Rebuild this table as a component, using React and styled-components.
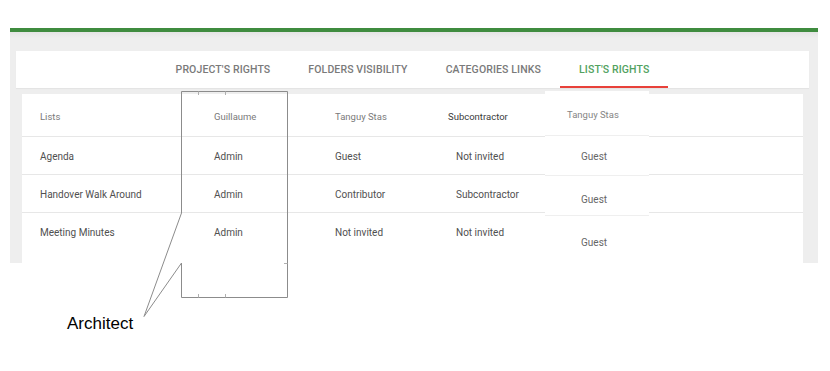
import React from 'react'
import styled, { createGlobalStyle } from 'styled-components'

const colors = {
  green: '#3f8c3f',
  gray: '#eeeeee',
  tabText: '#7a7a7a',
  active: '#52a25f',
  red: '#e8413a',
  line: '#e7e7e7',
  head: '#7a7a7a',
  cell: '#505050',
  callout: '#8c8c8c',
}

const tabs = ["Project's rights", 'Folders visibility', 'Categories links', "List's rights"]

const columns = [
  { name: 'Guillaume' },
  { name: 'Tanguy Stas' },
  { name: 'Subcontractor', pasted: true },
]

const rows = [
  { list: 'Agenda', values: ['Admin', 'Guest', 'Not invited'] },
  { list: 'Handover Walk Around', values: ['Admin', 'Contributor', 'Subcontractor'] },
  { list: 'Meeting Minutes', values: ['Admin', 'Not invited', 'Not invited'] },
]

// pasted column on the right, slightly off the grid of the table
const extraColumn = { name: 'Tanguy Stas', values: [{ v: 'Guest', offset: 15 }, { v: 'Guest', offset: 18 }, { v: 'Guest', offset: 21 }] }

const App = () => (
  <>
    <GlobalStyle />
    <Page>
      <Shell>
        <TabBar>
          {tabs.map((t, i) => (
            <Tab key={t} active={i === tabs.length - 1}>
              {t}
            </Tab>
          ))}
        </TabBar>
        <TableCard>
          <HeadRow>
            <HeadCell>Lists</HeadCell>
            {columns.map((c) => (
              <HeadCell key={c.name} pasted={c.pasted}>
                {c.name}
              </HeadCell>
            ))}
          </HeadRow>
          {rows.map((r, i) => (
            <Row key={r.list} last={i === rows.length - 1}>
              <Cell>{r.list}</Cell>
              {r.values.map((v, j) => (
                <Cell key={j}>{v}</Cell>
              ))}
            </Row>
          ))}
          <ExtraColumn>
            <ExtraHead>{extraColumn.name}</ExtraHead>
            {extraColumn.values.map((c, i) => (
              <ExtraCell key={i} offset={c.offset} last={i === extraColumn.values.length - 1}>
                {c.v}
              </ExtraCell>
            ))}
          </ExtraColumn>
        </TableCard>
      </Shell>
      <Callout width="830" height="371" viewBox="0 0 830 371">
        <path
          d="M181.5 91.5 V213 L144 316.5 L181.5 263 V297.5 H287.5 V91.5 Z"
          fill="none"
          stroke={colors.callout}
          strokeWidth="1"
        />
        <g stroke="#b0b0b0" strokeWidth="1">
          <path d="M198.5 91.5 V95" />
          <path d="M225.5 91.5 V95" />
          <path d="M198.5 294 V297.5" />
          <path d="M225.5 294 V297.5" />
          <path d="M284 263.5 H287.5" />
        </g>
      </Callout>
      <Label>Architect</Label>
    </Page>
  </>
)

export default App

const GlobalStyle = createGlobalStyle`
  body {
    margin: 0;
    background: #ffffff;
    font-family: Roboto, 'Liberation Sans', sans-serif;
  }
`

const Page = styled.div`
  position: relative;
  width: 830px;
  height: 371px;
  padding: 28px 0 0 10px;
  box-sizing: border-box;
`

const Shell = styled.div`
  width: 808px;
  height: 235px;
  border-top: 4px solid ${colors.green};
  box-sizing: border-box;
  background: linear-gradient(to bottom, #e4e4e4 0px, ${colors.gray} 6px);
  display: flex;
  flex-direction: column;
  overflow: hidden;
`

const TabBar = styled.div`
  margin: 19px 9px 0 6px;
  height: 37px;
  background: #ffffff;
  display: flex;
  justify-content: center;
  box-shadow: 0 1px 1px rgba(0, 0, 0, 0.04);
`

const Tab = styled.div`
  display: flex;
  align-items: center;
  padding: 2px 19px 0;
  box-sizing: border-box;
  height: 37px;
  font-size: 10.5px;
  font-weight: 500;
  letter-spacing: 0.12px;
  text-transform: uppercase;
  color: ${(p) => (p.active ? colors.active : colors.tabText)};
  border-bottom: 2px solid ${(p) => (p.active ? colors.red : 'transparent')};
`

const TableCard = styled.div`
  position: relative;
  margin: 6px 15px 0 12px;
  flex: 1;
  background: #ffffff;
`

const grid = `
  display: grid;
  grid-template-columns: 174px 121px 121px 1fr;
  align-items: center;
`

const HeadRow = styled.div`
  ${grid}
  height: 43px;
  padding-top: 2px;
  box-sizing: border-box;
  border-bottom: 1px solid ${colors.line};
`

const HeadCell = styled.div`
  padding-left: 18px;
  font-size: 9.5px;
  color: ${(p) => (p.pasted ? '#3a3a3a' : colors.head)};
  margin-left: ${(p) => (p.pasted ? '-8px' : '0')};
  margin-top: ${(p) => (p.pasted ? '1px' : '0')};
`

const Row = styled.div`
  ${grid}
  height: 38px;
  padding-top: 2px;
  box-sizing: border-box;
  border-bottom: 1px solid ${(p) => (p.last ? 'transparent' : colors.line)};
`

const Cell = styled.div`
  padding-left: 18px;
  font-size: 10px;
  color: ${colors.cell};
`

const ExtraColumn = styled.div`
  position: absolute;
  left: 523px;
  top: -3px;
  bottom: 0;
  width: 104px;
  background: #ffffff;
`

const ExtraHead = styled.div`
  height: 45px;
  border-bottom: 1px solid #efefef;
  padding: 18px 0 0 22px;
  box-sizing: border-box;
  font-size: 9.5px;
  color: #858585;
`

const ExtraCell = styled.div`
  height: 40px;
  box-sizing: border-box;
  border-bottom: 1px solid ${(p) => (p.last ? 'transparent' : '#efefef')};
  padding: ${(p) => p.offset}px 0 0 36px;
  font-size: 10px;
  color: #666666;
`

const Callout = styled.svg`
  position: absolute;
  left: 0;
  top: 0;
  pointer-events: none;
`

const Label = styled.div`
  position: absolute;
  left: 67px;
  top: 315px;
  font-family: 'Liberation Sans', Arial, sans-serif;
  font-size: 17px;
  line-height: 17px;
  color: #000000;
`
